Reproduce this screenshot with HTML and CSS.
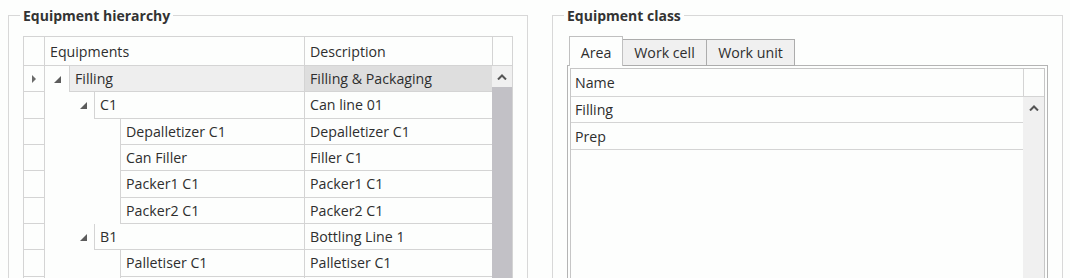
FILE: index.html
```html
<!DOCTYPE html>
<html lang="en">

<head>
    <meta charset="UTF-8">
    <title>Equipment</title>
    <link rel="stylesheet" href="styles.css">
</head>

<body>
    <div class="page">
        <!-- Equipment hierarchy -->
        <fieldset class="group group-hierarchy">
            <legend>Equipment hierarchy</legend>
            <div class="grid">
                <div class="grid-head">
                    <div class="rh"></div>
                    <div class="head-eq">Equipments</div>
                    <div class="head-desc">Description</div>
                    <div class="head-scroll"></div>
                </div>
                <div class="grid-body">
                    <div class="rows">
                        <div class="row selected">
                            <div class="rh"><svg width="5" height="8" viewBox="0 0 5 8"><polygon points="0,0 4,4 0,8" fill="#6b6b6b"/></svg></div>
                            <div class="tree">
                                <div class="indent lvl0"><svg class="expander" width="7" height="7" viewBox="0 0 7 7"><polygon points="0,7 7,0 7,7" fill="#5c5c5c"/></svg></div>
                                <div class="cell">Filling</div>
                            </div>
                            <div class="desc">Filling &amp; Packaging</div>
                        </div>
                        <div class="row">
                            <div class="rh"></div>
                            <div class="tree">
                                <div class="indent lvl1"><svg class="expander" width="7" height="7" viewBox="0 0 7 7"><polygon points="0,7 7,0 7,7" fill="#5c5c5c"/></svg></div>
                                <div class="cell">C1</div>
                            </div>
                            <div class="desc">Can line 01</div>
                        </div>
                        <div class="row">
                            <div class="rh"></div>
                            <div class="tree">
                                <div class="indent lvl2"></div>
                                <div class="cell">Depalletizer C1</div>
                            </div>
                            <div class="desc">Depalletizer C1</div>
                        </div>
                        <div class="row">
                            <div class="rh"></div>
                            <div class="tree">
                                <div class="indent lvl2"></div>
                                <div class="cell">Can Filler</div>
                            </div>
                            <div class="desc">Filler C1</div>
                        </div>
                        <div class="row">
                            <div class="rh"></div>
                            <div class="tree">
                                <div class="indent lvl2"></div>
                                <div class="cell">Packer1 C1</div>
                            </div>
                            <div class="desc">Packer1 C1</div>
                        </div>
                        <div class="row">
                            <div class="rh"></div>
                            <div class="tree">
                                <div class="indent lvl2"></div>
                                <div class="cell">Packer2 C1</div>
                            </div>
                            <div class="desc">Packer2 C1</div>
                        </div>
                        <div class="row">
                            <div class="rh"></div>
                            <div class="tree">
                                <div class="indent lvl1"><svg class="expander" width="7" height="7" viewBox="0 0 7 7"><polygon points="0,7 7,0 7,7" fill="#5c5c5c"/></svg></div>
                                <div class="cell">B1</div>
                            </div>
                            <div class="desc">Bottling Line 1</div>
                        </div>
                        <div class="row">
                            <div class="rh"></div>
                            <div class="tree">
                                <div class="indent lvl2"></div>
                                <div class="cell">Palletiser C1</div>
                            </div>
                            <div class="desc">Palletiser C1</div>
                        </div>
                        <div class="row">
                            <div class="rh"></div>
                            <div class="tree">
                                <div class="indent lvl2"></div>
                                <div class="cell"></div>
                            </div>
                            <div class="desc"></div>
                        </div>
                    </div>
                    <div class="vscroll">
                        <div class="vscroll-up"><svg width="10" height="6" viewBox="0 0 10 6"><polyline points="1,5.5 5,1.5 9,5.5" fill="none" stroke="#555" stroke-width="2"/></svg></div>
                        <div class="vscroll-thumb"></div>
                    </div>
                </div>
            </div>
        </fieldset>

        <!-- Equipment class -->
        <fieldset class="group group-class">
            <legend>Equipment class</legend>
            <div class="tabs">
                <div class="tab-gap"></div>
                <div class="tab active">Area</div>
                <div class="tab tab-cell">Work cell</div>
                <div class="tab tab-unit">Work unit</div>
                <div class="tab-fill"></div>
            </div>
            <div class="tab-panel">
                <div class="list">
                    <div class="list-head">
                        <div class="list-name">Name</div>
                        <div class="head-scroll"></div>
                    </div>
                    <div class="list-body">
                        <div class="list-rows">
                            <div class="list-row">Filling</div>
                            <div class="list-row">Prep</div>
                        </div>
                        <div class="list-scroll">
                            <div class="vscroll-up"><svg width="10" height="6" viewBox="0 0 10 6"><polyline points="1,5.5 5,1.5 9,5.5" fill="none" stroke="#555" stroke-width="2"/></svg></div>
                        </div>
                    </div>
                </div>
            </div>
        </fieldset>
    </div>
</body>

</html>
```

FILE: styles.css
```css
/* Page */
body {
    margin: 0;
    background: #fdfefd;
    color: #2e2e2e;
    font-family: 'Open Sans', 'Noto Sans', sans-serif;
    font-size: 14.2px;
    overflow: hidden;
    height: 278px;
}

.page {
    display: flex;
    gap: 24px;
    padding: 6px 0 0 8px;
}

/* Group boxes */
.group {
    margin: 0;
    padding: 11px 14px 0 14px;
    border: 1px solid #d8d8d8;
    height: 300px;
    box-sizing: border-box;
    min-width: 0;
}

.group legend {
    padding: 0 3px;
    margin-left: -3px;
    font-weight: 700;
    font-size: 14px;
    line-height: 19px;
    color: #333333;
}

.group-hierarchy {
    width: 520px;
}

.group-class {
    width: 511px;
}

/* Data grid */
.grid {
    border: 1px solid #d4d4d4;
    border-bottom: none;
    height: 260px;
}

.grid-head {
    display: flex;
    height: 28px;
    border-bottom: 1px solid #d4d4d4;
}

.rh {
    width: 21px;
    flex-shrink: 0;
    border-right: 1px solid #d4d4d4;
    box-sizing: border-box;
    display: flex;
    align-items: center;
    justify-content: center;
    padding-left: 1px;
}

.head-eq,
.head-desc {
    display: flex;
    align-items: center;
    padding-left: 5px;
    box-sizing: border-box;
    border-right: 1px solid #d4d4d4;
}

.head-eq {
    width: 260px;
}

.head-desc {
    width: 188px;
}

.head-scroll {
    width: 19px;
}

.grid-body {
    display: flex;
}

.rows {
    width: 468px;
}

.row {
    display: flex;
    height: 26.33px;
}

.row .rh {
    border-bottom: 1px solid #d4d4d4;
}

.tree {
    width: 260px;
    display: flex;
    border-right: 1px solid #d4d4d4;
    box-sizing: border-box;
}

.indent {
    flex-shrink: 0;
    display: flex;
    align-items: center;
    justify-content: flex-end;
    box-sizing: border-box;
}

.indent.lvl0 {
    width: 24px;
    padding-right: 8px;
}

.indent.lvl1 {
    width: 49px;
    padding-right: 7px;
}

.indent.lvl2 {
    width: 75px;
}

.expander {
    margin-top: 1px;
}

.cell {
    flex: 1;
    display: flex;
    align-items: center;
    padding-left: 5px;
    border-left: 1px solid #d4d4d4;
    border-bottom: 1px solid #d4d4d4;
    white-space: nowrap;
}

.desc {
    width: 187px;
    display: flex;
    align-items: center;
    padding-left: 5px;
    box-sizing: border-box;
    border-bottom: 1px solid #d4d4d4;
    white-space: nowrap;
}

.row.selected .cell {
    background: #eeeeee;
}

.row.selected .desc {
    background: #dedede;
}

/* Scrollbars */
.vscroll {
    width: 20px;
    display: flex;
    flex-direction: column;
    background: #f0f0f0;
}

.vscroll-up {
    height: 21px;
    display: flex;
    align-items: center;
    justify-content: center;
    background: #f0f0f0;
}

.vscroll-thumb {
    flex: 1;
    height: 200px;
    background: #c2c1c6;
}

/* Tabs */
.tabs {
    display: flex;
    align-items: flex-end;
    height: 30px;
}

.tab-gap {
    width: 2px;
    border-bottom: 1px solid #b4b4b4;
}

.tab-fill {
    flex: 1;
    border-bottom: 1px solid #b4b4b4;
}

.tab {
    height: 27px;
    box-sizing: border-box;
    display: flex;
    align-items: center;
    justify-content: center;
    background: #f0f0f0;
    border: 1px solid #acacac;
    border-left: none;
    white-space: nowrap;
}

.tab.active {
    height: 30px;
    width: 54px;
    background: #fdfefd;
    border: 1px solid #c0c0c0;
    border-bottom: none;
    padding-top: 1px;
}

.tab-cell {
    width: 84px;
}

.tab-unit {
    width: 88px;
}

.tab-panel {
    border: 1px solid #b4b4b4;
    border-top: none;
    padding: 2px;
    height: 220px;
}

.list {
    border: 1px solid #c6c6c6;
    height: 100%;
    box-sizing: border-box;
    display: flex;
    flex-direction: column;
}

.list-head {
    display: flex;
    height: 27px;
    border-bottom: 1px solid #d4d4d4;
}

.list-name {
    flex: 1;
    display: flex;
    align-items: center;
    padding-left: 4px;
    border-right: 1px solid #d4d4d4;
}

.list-head .head-scroll {
    width: 20px;
}

.list-body {
    flex: 1;
    display: flex;
}

.list-rows {
    flex: 1;
}

.list-row {
    height: 26.4px;
    box-sizing: border-box;
    display: flex;
    align-items: center;
    padding-left: 4px;
    border-bottom: 1px solid #d4d4d4;
}

.list-scroll {
    width: 21px;
    background: #f0f0f0;
}
```
